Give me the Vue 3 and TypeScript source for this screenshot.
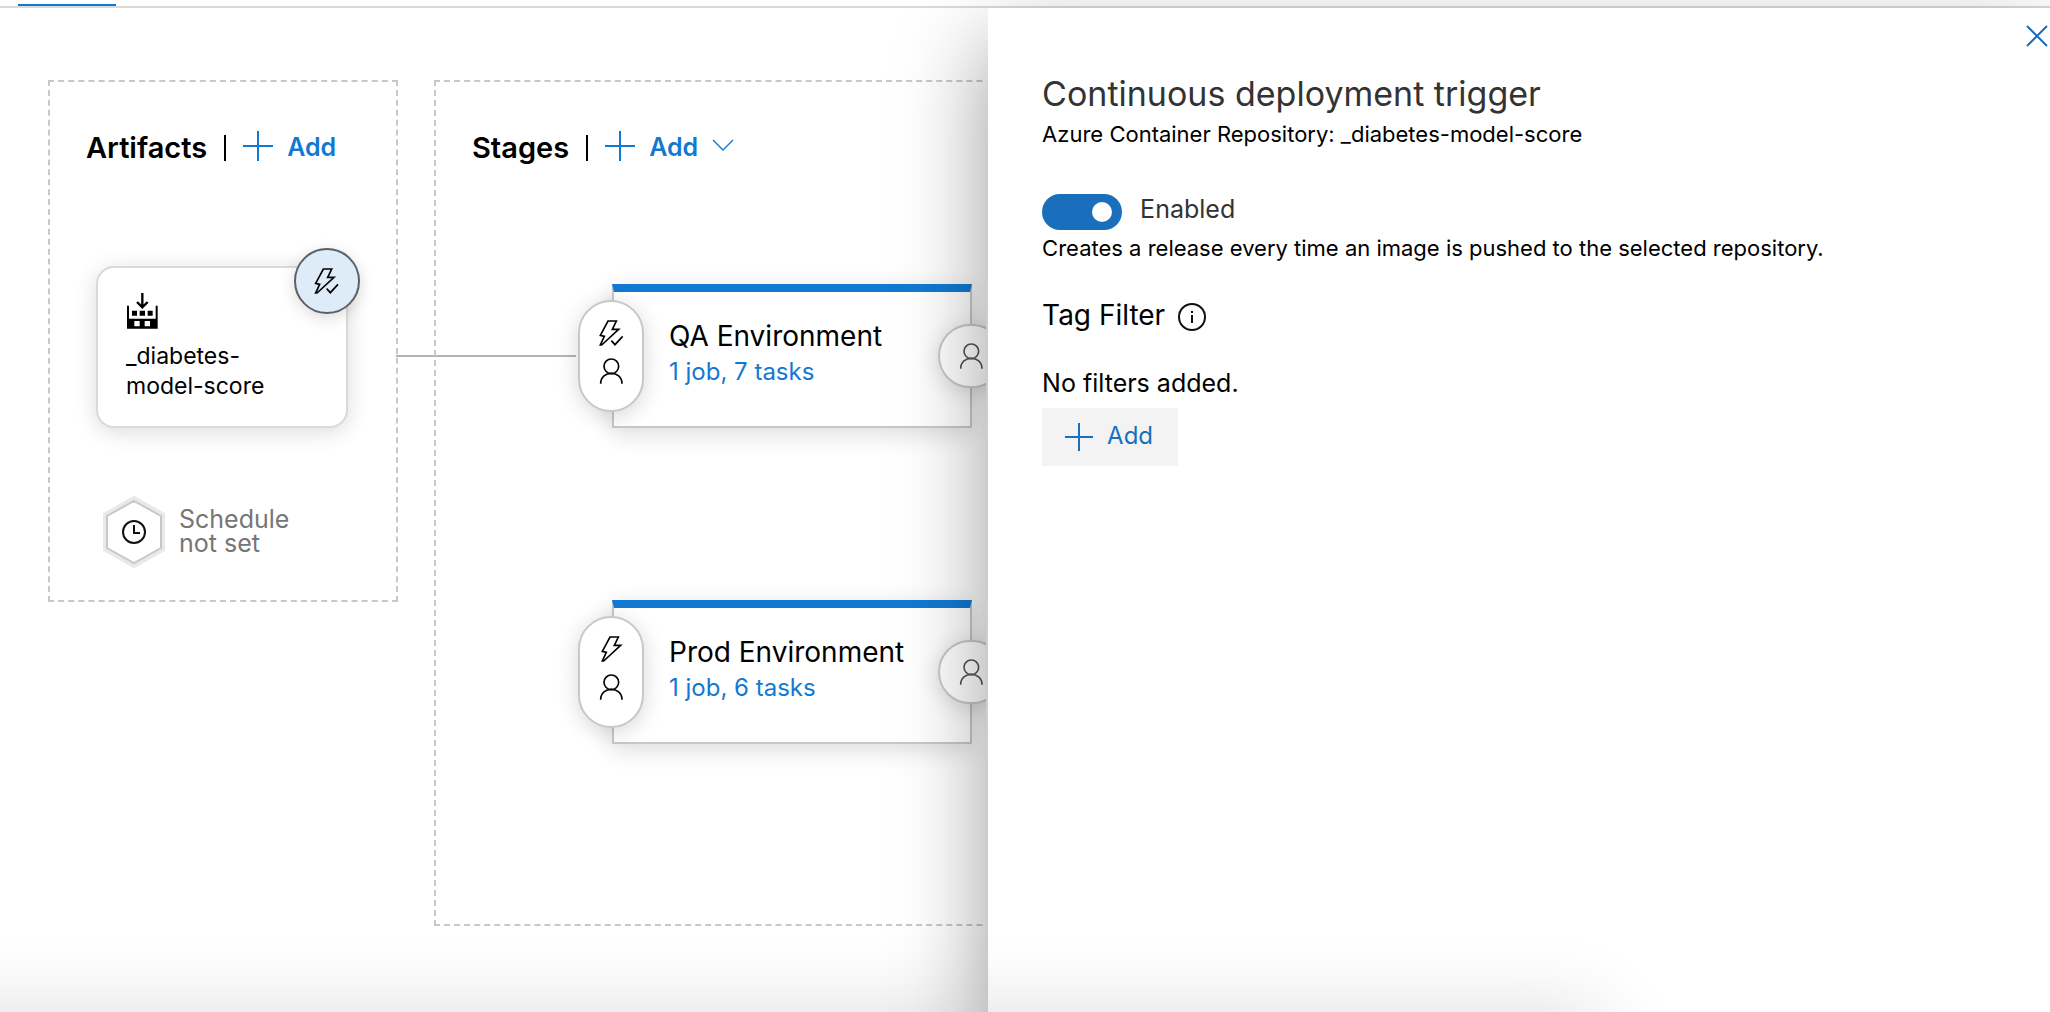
<script setup lang="ts">
import { ref } from 'vue'

interface Stage {
  id: number
  name: string
  tasks: string
  afterRelease: boolean
}

const stages: Stage[] = [
  { id: 1, name: 'QA Environment', tasks: '1 job, 7 tasks', afterRelease: true },
  { id: 2, name: 'Prod Environment', tasks: '1 job, 6 tasks', afterRelease: false },
]

const enabled = ref(true)
</script>

<template>
  <div class="page">
    <div class="tabbar"><span class="tab-active"></span></div>
    <div class="body">
      <main class="canvas">
        <section class="group artifacts">
          <header class="group-head">
            <h2>Artifacts</h2>
            <span class="divider"></span>
            <button class="add" type="button">
              <svg class="plus" viewBox="0 0 30 30"><path d="M15 0V30M0 15H30" /></svg>
              Add
            </button>
          </header>

          <div class="artifact-card">
            <svg class="source" viewBox="-2 0 96 108">
              <path d="M1 38h6v39h80V38h6v69H1zM23 84v16h16V84zM54 84v16h16V84z" fill-rule="evenodd" />
              <path d="M16 53h15v15H16zM39 53h16v15H39zM63 53h15v15H63z" />
              <path d="M47 0V42M31 27L47 43L63 27" fill="none" stroke="#000" stroke-width="7" />
            </svg>
            <p>_diabetes-<br />model-score</p>
            <button class="trigger" type="button" aria-label="Continuous deployment trigger">
              <svg class="glyph" viewBox="0 0 78 78">
                <path d="M28 3H53L41 28H60L9 75H5L17 49L5 46Z" />
                <path d="M38 62L49 74L72 49" />
              </svg>
            </button>
          </div>

          <div class="schedule">
            <svg class="hexagon" viewBox="0 0 64 72">
              <path d="M32 3L60 19V53L32 69L4 53V19Z" fill="#fff" stroke="#e9e9e9" stroke-width="6" />
              <path d="M32 5L59 20V52L32 67L5 52V20Z" fill="#fff" stroke="#c8c8c8" stroke-width="2" />
              <circle cx="32" cy="36" r="11" fill="none" stroke="#111" stroke-width="2" />
              <path d="M32 29V37H38" fill="none" stroke="#111" stroke-width="2" />
            </svg>
            <p>Schedule<br />not set</p>
          </div>
          <span class="connector"></span>
        </section>

        <section class="group stages">
          <header class="group-head">
            <h2>Stages</h2>
            <span class="divider"></span>
            <button class="add" type="button">
              <svg class="plus" viewBox="0 0 30 30"><path d="M15 0V30M0 15H30" /></svg>
              Add
              <svg class="chevron" viewBox="0 0 22 12"><path d="M1 1L11 11L21 1" stroke-width="1.4" /></svg>
            </button>
          </header>

          <div class="stage-list">
            <article v-for="stage in stages" :key="stage.id" class="stage">
              <h3>{{ stage.name }}</h3>
              <a href="#">{{ stage.tasks }}</a>
              <button class="pre" type="button" aria-label="Pre-deployment conditions">
                <svg class="glyph" viewBox="0 0 78 78">
                  <g v-if="stage.afterRelease">
                    <path d="M30 3H55L43 28H62L11 75H7L19 49L7 46Z" />
                    <path d="M40 62L51 74L74 49" />
                  </g>
                  <path v-else d="M36 3H61L49 28H68L17 75H13L25 49L13 46Z" />
                </svg>
                <svg class="glyph" viewBox="0 0 78 78">
                  <circle cx="40" cy="25" r="22" />
                  <path d="M8 77C8 36 72 36 72 77" />
                </svg>
              </button>
              <button class="post" type="button" aria-label="Post-deployment conditions">
                <svg class="glyph" viewBox="0 0 78 78">
                  <circle cx="40" cy="25" r="22" />
                  <path d="M8 77C8 36 72 36 72 77" />
                </svg>
              </button>
            </article>
          </div>
        </section>
      </main>

      <aside class="panel">
        <button class="close" type="button" aria-label="Close">
          <svg viewBox="0 0 22 22"><path d="M1 1L21 21M21 1L1 21" /></svg>
        </button>
        <h1>Continuous deployment trigger</h1>
        <p class="subtitle">Azure Container Repository: _diabetes-model-score</p>
        <div class="toggle-row">
          <input id="cd-enabled" v-model="enabled" class="toggle" type="checkbox" role="switch" />
          <label for="cd-enabled">{{ enabled ? 'Enabled' : 'Disabled' }}</label>
        </div>
        <p class="description">Creates a release every time an image is pushed to the selected repository.</p>
        <div class="filter-head">
          <h2>Tag Filter</h2>
          <svg class="info" viewBox="0 0 28 28">
            <circle cx="14" cy="14" r="13" />
            <path d="M14 12V20M14 8V10" />
          </svg>
        </div>
        <p class="empty">No filters added.</p>
        <button class="add-filter" type="button">
          <svg class="plus" viewBox="0 0 28 28"><path d="M14 0V28M0 14H28" /></svg>
          Add
        </button>
      </aside>
    </div>
    <div class="bottom-shade"></div>
  </div>
</template>

<style>
body {
  margin: 0;
  background: #fff;
}
</style>

<style scoped>
* {
  box-sizing: border-box;
}

.page {
  position: relative;
  display: flex;
  flex-direction: column;
  height: 100vh;
  overflow: hidden;
  font-family: Inter, 'Liberation Sans', sans-serif;
  color: #000;
}

h1,
h2,
h3,
p {
  margin: 0;
  font-weight: 400;
}

button {
  padding: 0;
  border: 0;
  background: none;
  font: inherit;
  color: inherit;
  cursor: pointer;
}

svg {
  display: block;
  flex: none;
}

.tabbar {
  display: flex;
  align-items: flex-end;
  flex: none;
  height: 8px;
  padding-left: 18px;
  border-bottom: 2px solid #dadada;
}

.tab-active {
  width: 98px;
  height: 2px;
  background: #1279d2;
}

.body {
  display: flex;
  flex: 1;
  min-height: 0;
}

.canvas {
  display: flex;
  align-items: flex-start;
  gap: 36px;
  flex: 1;
  min-width: 0;
  padding: 72px 0 0 48px;
  border-right: 2px solid #fff;
  overflow: hidden;
}

.group {
  position: relative;
  flex: none;
  border: 2px dashed #c8c8c8;
}

.artifacts {
  width: 350px;
  padding: 46px 36px 32px;
}

.stages {
  width: 900px;
  height: 846px;
  padding: 46px 36px;
}

.group-head {
  display: flex;
  align-items: center;
  height: 40px;
}

.group-head h2 {
  font-size: 29px;
  line-height: 40px;
  font-weight: 600;
}

.divider {
  width: 2px;
  height: 26px;
  margin: 0 17px;
  background: #000;
}

.add {
  display: flex;
  align-items: center;
  gap: 14px;
  margin-bottom: 2px;
  font-size: 25px;
  line-height: 36px;
  font-weight: 600;
  color: #1279d2;
}

.plus {
  width: 30px;
  height: 30px;
  fill: none;
  stroke: currentColor;
  stroke-width: 2;
}

.add .plus {
  margin-bottom: 2px;
}

.chevron {
  width: 22px;
  height: 12px;
  margin-bottom: 4px;
  fill: none;
  stroke: currentColor;
}

.artifact-card {
  position: relative;
  width: 252px;
  height: 162px;
  margin: 98px 0 0 10px;
  padding: 25px 28px;
  border: 2px solid #dadada;
  border-radius: 18px;
  background: #fff;
  box-shadow: 0 4px 22px rgba(0, 0, 0, 0.14);
}

.source {
  width: 32px;
  height: 36px;
}

.artifact-card p {
  margin-top: 12px;
  font-size: 23px;
  line-height: 30px;
}

.trigger {
  position: absolute;
  top: -20px;
  right: -14px;
  display: flex;
  align-items: center;
  justify-content: center;
  width: 66px;
  height: 66px;
  border: 2px solid #5c6166;
  border-radius: 50%;
  background: #deecf9;
  box-shadow: 0 4px 16px rgba(0, 0, 0, 0.14);
}

.glyph {
  width: 26px;
  height: 26px;
  fill: none;
  stroke: #000;
  stroke-width: 5;
}

.schedule {
  display: flex;
  align-items: center;
  gap: 13px;
  margin: 68px 0 0 16px;
  color: #767676;
  font-size: 25px;
  line-height: 24px;
}

.schedule p {
  padding-bottom: 2px;
}

.hexagon {
  width: 64px;
  height: 72px;
}

.connector {
  position: absolute;
  top: 273px;
  left: 100%;
  width: 180px;
  height: 2px;
  background: #b4b4b4;
}

.stage-list {
  display: flex;
  flex-direction: column;
  gap: 172px;
  margin: 116px 0 0 140px;
}

.stage {
  position: relative;
  width: 360px;
  height: 144px;
  padding: 26px 0 0 55px;
  border: 2px solid #c8c8c8;
  border-top: 8px solid #1279d2;
  background: #fff;
  box-shadow: 0 6px 22px rgba(0, 0, 0, 0.14);
}

.stage h3 {
  font-size: 28px;
  line-height: 36px;
}

.stage a {
  display: block;
  font-size: 24px;
  line-height: 36px;
  color: #1279d2;
  text-decoration: none;
}

.pre,
.post {
  position: absolute;
  display: flex;
  flex-direction: column;
  align-items: center;
  border: 2px solid #c8c8c8;
  background: #fff;
  box-shadow: 0 4px 22px rgba(0, 0, 0, 0.16);
}

.pre {
  top: 8px;
  left: -36px;
  gap: 12px;
  width: 66px;
  height: 112px;
  padding-top: 18px;
  border-radius: 33px;
}

.post {
  top: 32px;
  right: -34px;
  justify-content: center;
  width: 66px;
  height: 64px;
  border-radius: 33px;
}

.post .glyph {
  stroke: #555;
}

.panel {
  position: relative;
  flex: none;
  width: 51.8%;
  padding: 64px 54px 0;
  background: #fff;
  box-shadow: 0 36px 84px rgba(0, 0, 0, 0.4);
}

.close {
  position: absolute;
  top: 17px;
  right: 2px;
  width: 22px;
  height: 22px;
  color: #1a6fbd;
}

.close svg {
  width: 22px;
  height: 22px;
  fill: none;
  stroke: currentColor;
  stroke-width: 2;
}

h1 {
  font-size: 34px;
  line-height: 44px;
  color: #333;
}

.subtitle,
.description {
  font-size: 22px;
  line-height: 36px;
}

.toggle-row {
  display: flex;
  align-items: center;
  gap: 18px;
  height: 36px;
  margin-top: 42px;
}

.toggle {
  appearance: none;
  position: relative;
  width: 80px;
  height: 36px;
  margin: 0;
  border-radius: 18px;
  background: #767676;
}

.toggle::after {
  content: '';
  position: absolute;
  top: 8px;
  left: 10px;
  width: 20px;
  height: 20px;
  border-radius: 50%;
  background: #fff;
}

.toggle:checked {
  background: #1a6fbd;
}

.toggle:checked::after {
  left: 50px;
}

.toggle-row label {
  padding-bottom: 6px;
  font-size: 25px;
  line-height: 30px;
  color: #333;
}

.filter-head {
  display: flex;
  align-items: center;
  gap: 13px;
  margin-top: 29px;
}

.filter-head h2 {
  font-size: 28px;
  line-height: 40px;
}

.info {
  width: 28px;
  height: 28px;
  margin-top: 3px;
  fill: none;
  stroke: #111;
  stroke-width: 2;
}

.empty {
  margin-top: 30px;
  font-size: 25px;
  line-height: 36px;
}

.add-filter {
  display: flex;
  align-items: center;
  gap: 14px;
  height: 58px;
  margin-top: 7px;
  padding: 0 25px 3px 23px;
  background: #f3f3f3;
  color: #1a6fbd;
  font-size: 24px;
}

.add-filter .plus {
  width: 28px;
  height: 28px;
  margin-top: 2px;
}

.bottom-shade {
  position: absolute;
  top: 100%;
  left: -10%;
  width: 88%;
  height: 100px;
  box-shadow: 0 0 84px rgba(0, 0, 0, 0.14);
  pointer-events: none;
}
</style>
